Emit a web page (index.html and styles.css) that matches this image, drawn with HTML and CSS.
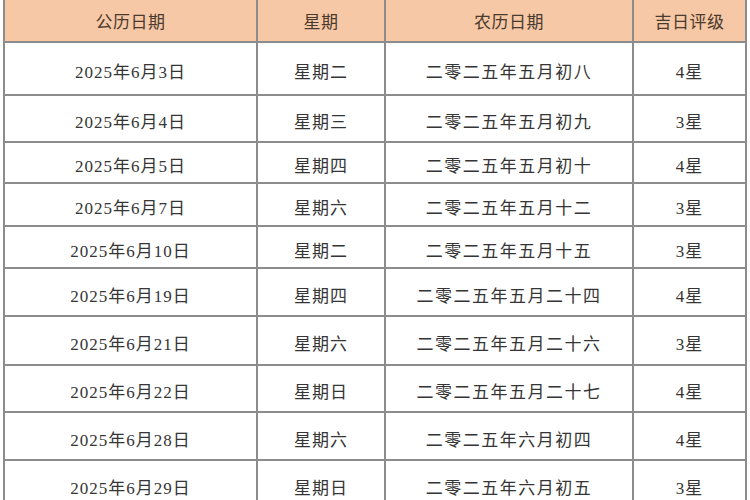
FILE: index.html
```html
<!DOCTYPE html>
<html lang="zh-CN">
<head>
<meta charset="utf-8">
<title>2025年6月吉日</title>
<link rel="stylesheet" href="styles.css">
</head>
<body>
<table class="days">
  <colgroup>
    <col class="c-date"><col class="c-week"><col class="c-lunar"><col class="c-star">
  </colgroup>
  <thead>
    <tr class="r0"><th>公历日期</th><th>星期</th><th>农历日期</th><th>吉日评级</th></tr>
  </thead>
  <tbody>
    <tr class="r1"><td>2025年6月3日</td><td>星期二</td><td class="lunar">二零二五年五月初八</td><td>4星</td></tr>
    <tr class="r2"><td>2025年6月4日</td><td>星期三</td><td class="lunar">二零二五年五月初九</td><td>3星</td></tr>
    <tr class="r3"><td>2025年6月5日</td><td>星期四</td><td class="lunar">二零二五年五月初十</td><td>4星</td></tr>
    <tr class="r4"><td>2025年6月7日</td><td>星期六</td><td class="lunar">二零二五年五月十二</td><td>3星</td></tr>
    <tr class="r5"><td>2025年6月10日</td><td>星期二</td><td class="lunar">二零二五年五月十五</td><td>3星</td></tr>
    <tr class="r6"><td>2025年6月19日</td><td>星期四</td><td class="lunar">二零二五年五月二十四</td><td>4星</td></tr>
    <tr class="r7"><td>2025年6月21日</td><td>星期六</td><td class="lunar">二零二五年五月二十六</td><td>3星</td></tr>
    <tr class="r8"><td>2025年6月22日</td><td>星期日</td><td class="lunar">二零二五年五月二十七</td><td>4星</td></tr>
    <tr class="r9"><td>2025年6月28日</td><td>星期六</td><td class="lunar">二零二五年六月初四</td><td>4星</td></tr>
    <tr class="r10"><td>2025年6月29日</td><td>星期日</td><td class="lunar">二零二五年六月初五</td><td>3星</td></tr>
  </tbody>
</table>
</body>
</html>
```
FILE: styles.css
```css
html, body {
  margin: 0;
  padding: 0;
  background: #ffffff;
  overflow: hidden;
}
.days {
  margin: -2px 0 0 3px;
  border-collapse: separate;
  border-spacing: 2px;
  background: #8c8c8c;
  table-layout: fixed;
  width: 744px;
  font-family: "Liberation Serif", "Noto Sans CJK SC", serif;
  font-size: 17px;
  color: #353535;
}
.c-date { width: 251px; }
.c-week { width: 126px; }
.c-lunar { width: 246px; }
.c-star { width: 111px; }
th, td {
  padding: 0;
  text-align: center;
  vertical-align: middle;
  white-space: nowrap;
  letter-spacing: 1px;
}
th {
  background: #f7c8a5;
  color: #4b3a2e;
  font-weight: normal;
  letter-spacing: 0.5px;
}
td {
  background: #ffffff;
  padding-top: 4px;
}
td.lunar {
  letter-spacing: 1.5px;
}
.r0 { height: 41px; }
.r1 { height: 51px; }
.r2 { height: 45px; }
.r3 { height: 39px; }
.r4 { height: 41px; }
.r5 { height: 40px; }
.r6 { height: 46px; }
.r7 { height: 47px; }
.r8 { height: 45px; }
.r9 { height: 46px; }
.r10 { height: 46px; }
```
